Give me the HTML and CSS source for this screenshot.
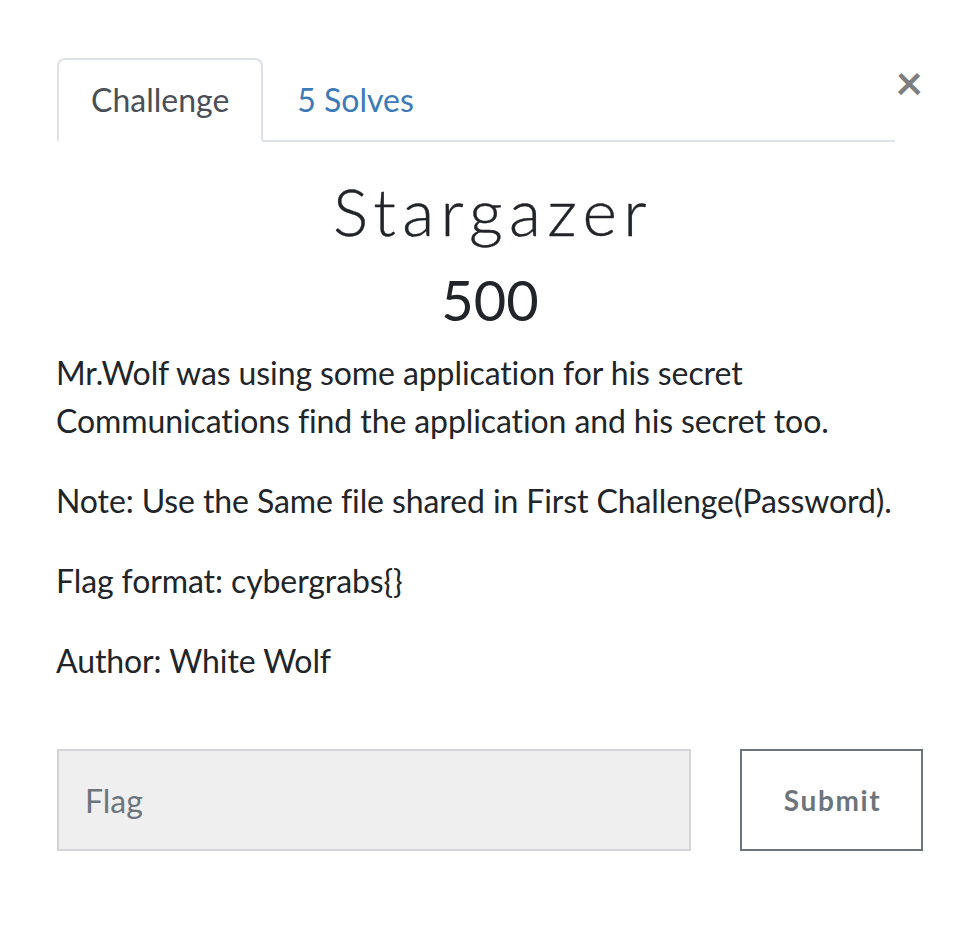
FILE: index.html
```html
<!DOCTYPE html>
<html>
<head>
<meta charset="utf-8">
<link rel="stylesheet" href="styles.css">
</head>
<body>
<div class="modal">
  <button class="close" type="button">×</button>
  <ul class="tabs">
    <li class="tab active">Challenge</li>
    <li class="tab link">5 Solves</li>
  </ul>
  <div class="content">
    <h2 class="title">Stargazer</h2>
    <h3 class="value">500</h3>
    <div class="desc">
      <p>Mr.Wolf was using some application for his secret Communications find the application and his secret too.</p>
      <p>Note: Use the Same file shared in First Challenge(Password).</p>
      <p>Flag format: cybergrabs{}</p>
      <p>Author: White Wolf</p>
    </div>
    <div class="submit-row">
      <input class="flag-input" type="text" placeholder="Flag">
      <button class="submit" type="button">Submit</button>
    </div>
  </div>
</div>
</body>
</html>
```

FILE: styles.css
```css
html, body {
  margin: 0;
  padding: 0;
  background: #ffffff;
}
body {
  font-family: Lato, "Noto Sans", sans-serif;
  color: #212529;
  font-size: 32px;
  line-height: 48px;
}
.modal {
  padding: 58px 57px 0 57px;
}
.close {
  float: right;
  margin: 0;
  padding: 0;
  border: 0;
  background: transparent;
  font-family: Lato, "Noto Sans", sans-serif;
  font-size: 48px;
  font-weight: 700;
  line-height: 1;
  color: #000;
  opacity: 0.5;
  margin-top: 0;
  cursor: pointer;
}
.tabs {
  display: flex;
  list-style: none;
  margin: 0;
  padding: 0;
  border-bottom: 2px solid #dee2e6;
}
.tab {
  padding: 16px 32px;
  border: 2px solid transparent;
  border-top-left-radius: 8px;
  border-top-right-radius: 8px;
  margin-bottom: -2px;
  font-size: 32px;
  line-height: 48px;
}
.tab.active {
  color: #495057;
  border-color: #dee2e6 #dee2e6 #ffffff;
  background: #fff;
}
.tab.link {
  color: #3c7ab8;
}
.content {
  padding-top: 29px;
}
.title {
  margin: 0 0 16px 0;
  padding-left: 6px;
  text-align: center;
  font-size: 66px;
  line-height: 79px;
  font-weight: 300;
  letter-spacing: 6.4px;
  -webkit-text-stroke: 0.4px #212529;
}
.value {
  margin: 0 0 16px 0;
  text-align: center;
  font-size: 56px;
  line-height: 67px;
  font-weight: 400;
}
.desc {
  letter-spacing: -0.1px;
  margin-left: -1px;
}
.desc p {
  margin: 0 0 32px 0;
}
.submit-row {
  display: grid;
  grid-template-columns: 634px 183px;
  column-gap: 49px;
  margin-top: 64px;
}
.flag-input {
  box-sizing: border-box;
  height: 102px;
  margin: 0;
  padding: 0 26px;
  background: #efefef;
  border: 2px solid #d3d6d9;
  border-radius: 0;
  font-family: Lato, "Noto Sans", sans-serif;
  font-size: 32px;
  color: #495057;
  outline: none;
}
.flag-input::placeholder {
  color: #6c757d;
  opacity: 1;
}
.submit {
  box-sizing: border-box;
  height: 102px;
  margin: 0;
  padding: 0 0 0 2px;
  background: #fff;
  border: 2px solid #6c757d;
  border-radius: 0;
  font-family: Lato, "Noto Sans", sans-serif;
  font-size: 28px;
  font-weight: 700;
  letter-spacing: 1.6px;
  color: #6c757d;
}
```
